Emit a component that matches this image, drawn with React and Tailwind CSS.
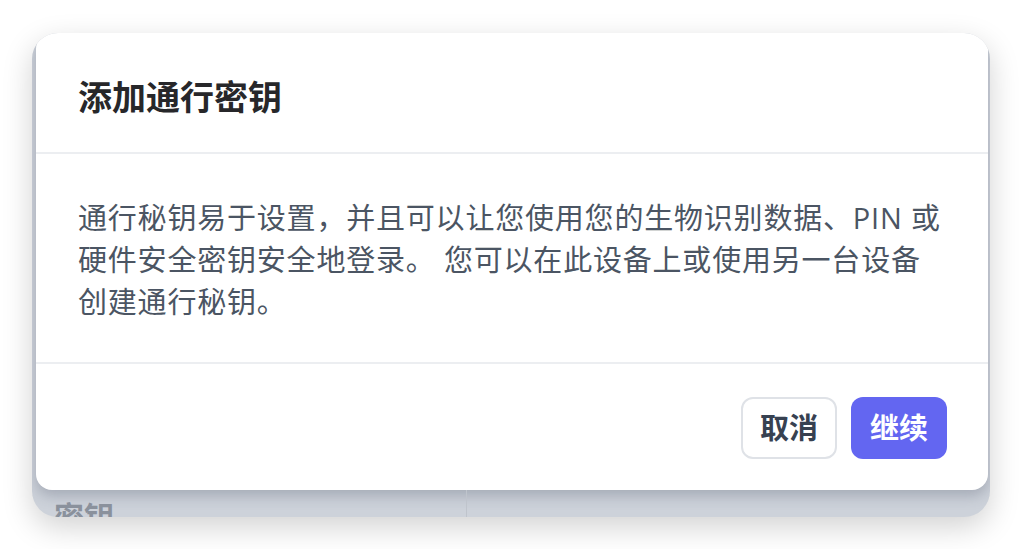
import React from 'react';

const font = { fontFamily: '"Open Sans", "Noto Sans CJK SC", sans-serif' };

const PasskeyDialog = () => {
  return (
    <div className="flex h-[457px] w-[952px] shrink-0 ml-[4px] flex-col rounded-[16px] bg-white shadow-[0_6px_14px_rgba(60,70,90,0.28)]">
      <div className="flex h-[121px] items-center border-b-2 border-[#eceef1] px-[42px] pt-[10px]">
        <h2 className="text-[34px] font-bold text-[#27272a]">添加通行密钥</h2>
      </div>
      <div className="border-b-2 border-[#eceef1] px-[42px] pt-[43px] pb-[39px]">
        <p className="text-[29px] leading-[42px] tracking-[0.8px] text-[#4b5563]">
          通行秘钥易于设置，并且可以让您使用您的生物识别数据、PIN 或硬件安全密钥安全地登录。 您可以在此设备上或使用另一台设备创建通行秘钥。
        </p>
      </div>
      <div className="flex flex-1 items-center justify-end gap-[14px] px-[41px] pt-[2px]">
        <button className="h-[62px] rounded-[12px] border-2 border-[#dfe2e7] bg-white px-[17px] text-[29px] font-bold text-[#374151]">
          取消
        </button>
        <button className="h-[62px] rounded-[12px] bg-[#6366f1] px-[19px] text-[29px] font-bold text-white">
          继续
        </button>
      </div>
    </div>
  );
};

const App = () => {
  return (
    <div className="h-[549px] w-[1024px] overflow-hidden bg-white pl-[32px] pt-[33px]" style={font}>
      <div className="flex h-[484px] w-[958px] flex-col overflow-hidden rounded-[26px] bg-[#cdd2da] shadow-[0_10px_30px_rgba(0,0,0,0.18)]">
        <PasskeyDialog />
        <div className="flex min-h-0 flex-1">
          <div className="w-[435px] border-r border-[#bfc4cc] pl-[22px] pt-[12px]">
            <span className="block text-[30px] font-bold leading-[30px] text-[#8a919c]">密钥</span>
          </div>
        </div>
      </div>
    </div>
  );
};

export default App;
